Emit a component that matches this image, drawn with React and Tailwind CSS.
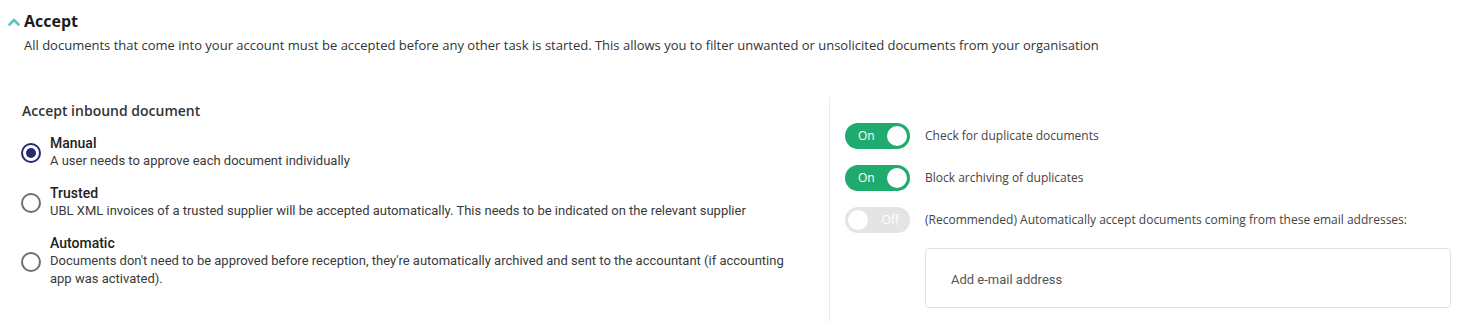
import React from "react";

const open = { fontFamily: '"Open Sans", "Liberation Sans", sans-serif' };
const roboto = { fontFamily: 'Roboto, "Liberation Sans", sans-serif' };

function Radio({ checked }) {
  return checked ? (
    <span className="mt-[1px] flex h-[20px] w-[20px] shrink-0 items-center justify-center rounded-full border-[2px] border-[#2b2873]">
      <span className="h-[10px] w-[10px] rounded-full bg-[#2b2873]" />
    </span>
  ) : (
    <span className="mt-[1px] h-[20px] w-[20px] shrink-0 rounded-full border-[2px] border-[#6f6f6f]" />
  );
}

function Toggle({ on }) {
  return on ? (
    <div className="flex h-[26px] w-[65px] shrink-0 items-center justify-between rounded-full bg-[#1fab6d] pl-[13px] pr-[3px]">
      <span className="text-[12px] text-white" style={open}>On</span>
      <span className="h-[20px] w-[20px] rounded-full bg-white" />
    </div>
  ) : (
    <div className="flex h-[26px] w-[65px] shrink-0 items-center justify-between rounded-full bg-[#e4e4e4] pl-[3px] pr-[11px]">
      <span className="h-[20px] w-[20px] rounded-full bg-white" />
      <span className="text-[12px] text-white" style={open}>Off</span>
    </div>
  );
}

const options = [
  {
    title: "Manual",
    desc: "A user needs to approve each document individually",
    checked: true,
  },
  {
    title: "Trusted",
    desc: "UBL XML invoices of a trusted supplier will be accepted automatically. This needs to be indicated on the relevant supplier",
  },
  {
    title: "Automatic",
    desc: "Documents don't need to be approved before reception, they're automatically archived and sent to the accountant (if accounting app was activated).",
  },
];

export default function App() {
  return (
    <div className="h-[331px] w-[1469px] overflow-hidden bg-white text-[#333]">
      <div className="flex items-center pl-[8px] pt-[9px]">
        <svg width="12" height="8" viewBox="0 0 12 8" className="mr-[4px] mt-[1px]">
          <path d="M1.5 6.5 L6 2 L10.5 6.5" fill="none" stroke="#5bc4be" strokeWidth="2.6" strokeLinecap="round" strokeLinejoin="round" />
        </svg>
        <h2 className="text-[16px] font-bold leading-[24px] text-[#1c1c1c]" style={open}>Accept</h2>
      </div>
      <p className="mt-[2px] pl-[24px] text-[13px] leading-[20px] text-[#333]" style={open}>
        All documents that come into your account must be accepted before any other task is started. This allows you to filter unwanted or unsolicited documents from your organisation
      </p>
      <div className="mt-[42px] flex">
        <div className="w-[830px] shrink-0 border-r border-[#ececec] pb-[34px] pl-[21px] pr-[30px] pt-[4px]">
          <h3 className="pl-[1px] text-[14px] font-semibold leading-[20px] text-[#333]" style={open}>Accept inbound document</h3>
          <div className="mt-[13px] flex flex-col gap-[14px]" style={roboto}>
            {options.map((o) => (
              <div key={o.title} className="flex items-center gap-[9px]">
                <Radio checked={o.checked} />
                <div>
                  <div className="text-[14px] font-medium leading-[18px] text-[#222]">{o.title}</div>
                  <div className="text-[13px] leading-[18px] text-[#3a3a3a]">{o.desc}</div>
                </div>
              </div>
            ))}
          </div>
        </div>
        <div className="flex-1 pl-[15px] pr-[18px] pt-[26px]" style={open}>
          <div className="flex flex-col gap-[16px]">
            <div className="flex items-center gap-[15px]">
              <Toggle on />
              <span className="text-[12px] text-[#444]">Check for duplicate documents</span>
            </div>
            <div className="flex items-center gap-[15px]">
              <Toggle on />
              <span className="text-[12px] text-[#444]">Block archiving of duplicates</span>
            </div>
            <div className="flex items-center gap-[15px]">
              <Toggle />
              <span className="text-[12px] text-[#444]">(Recommended) Automatically accept documents coming from these email addresses:</span>
            </div>
          </div>
          <div className="ml-[80px] mt-[15px] flex h-[60px] items-center rounded-[4px] border border-[#e2e2e2] pl-[25px] pt-[4px]">
            <span className="text-[13px] text-[#555]" style={roboto}>Add e-mail address</span>
          </div>
        </div>
      </div>
    </div>
  );
}
